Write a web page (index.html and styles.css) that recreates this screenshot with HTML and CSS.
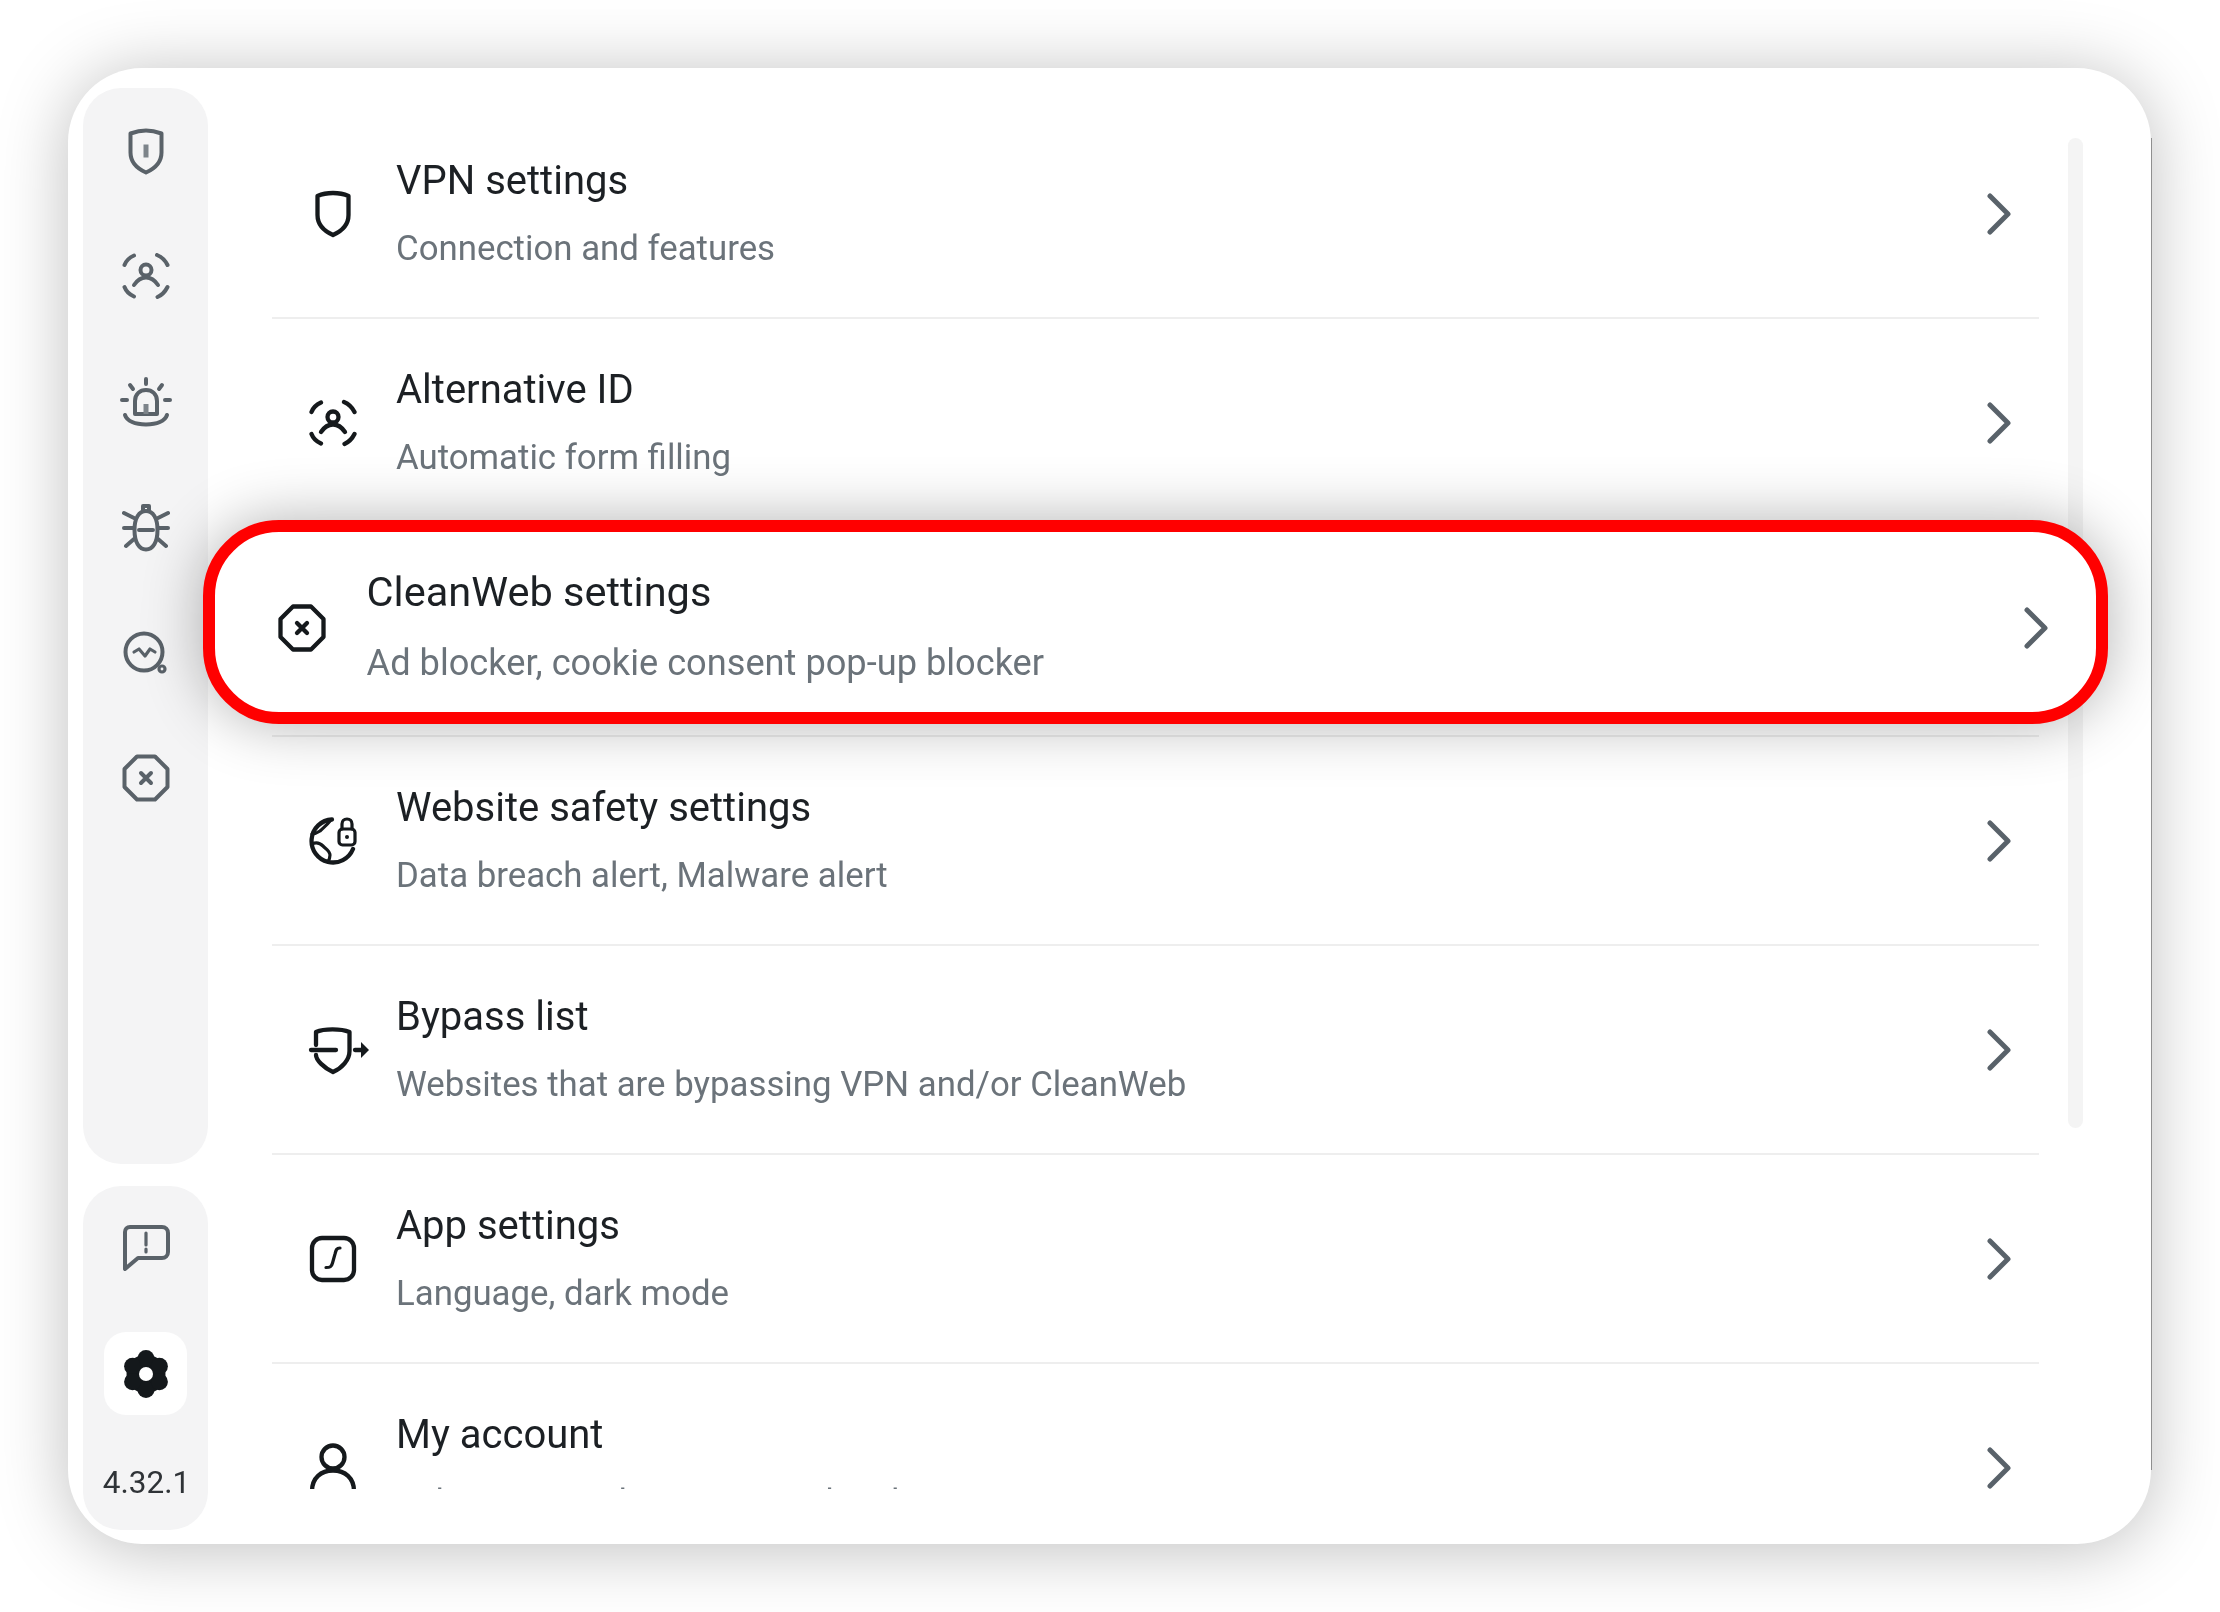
FILE: index.html
```html
<!DOCTYPE html>
<html lang="en">
<head>
<meta charset="utf-8">
<title>Settings</title>
<link rel="stylesheet" href="styles.css">
</head>
<body>
<div class="card">
  <aside class="sidebar">
    <nav class="rail rail-top">
      <svg class="icon side" viewBox="0 -1.500 48 48"><path d="M24 3C29 3 34 4 39.500 6V25C39.500 34 33 41 24 45C15 41 8.500 34 8.500 25V6C14 4 19 3 24 3Z"/><path class="thick" d="M24 17V30"/></svg>
      <svg class="icon side" viewBox="0 0 48 48"><path d="M2.500 13C4 9 7.500 5.500 12 3.500M35 3C40 5 43.500 9 45.500 13M2.500 35C4 39 7.500 42.500 12 44.500M35.500 45C40 43 43.500 39 45.500 35"/><circle cx="24" cy="18" r="5.500"/><path d="M12 33C15 28.500 19 25.500 24 25.500C29 25.500 33 28.500 36 33"/></svg>
      <svg class="icon side" viewBox="0 -2 48 48"><path d="M24 0V5M8 6L11 10M40 6L37 10M0 21H5M43 21H48M13 35V22C13 15 18 11 24 11C30 11 35 15 35 22V35Z"/><path class="thick" d="M24 25V35"/><path d="M3 36C5 42 13 45.500 24 45.500C35 45.500 43 42 45 36"/></svg>
      <svg class="icon side" viewBox="0 -1 48 48"><path d="M24 7C17 7 12.500 14 12.500 26C12.500 38 17 45.500 24 45.500C31 45.500 35.500 38 35.500 26C35.500 14 31 7 24 7Z"/><path d="M21 7V2H27V7M12 14L2 9M36 14L46 9M2 24H12M36 24H46M12 35L4 42M36 35L44 42M17 26H31"/></svg>
      <svg class="icon side" viewBox="0 -3 48 48"><circle cx="22" cy="21" r="18.500"/><path class="fine" d="M12 21L17 18L23 25L28 18L33 21"/><circle class="fine" cx="40" cy="38" r="3"/></svg>
      <svg class="icon side" viewBox="0 0 48 48"><path d="M15 2.500H33L45.500 15V33L33 45.500H15L2.500 33V15Z"/><path d="M19 19L29 29M29 19L19 29"/></svg>
    </nav>
    <div class="rail rail-bottom">
      <svg class="icon side" viewBox="0 0 48 48"><path d="M8 3H40C43.500 3 46 5.500 46 9V28C46 31.500 43.500 34 40 34H16L3 45V8C3 5 5 3 8 3Z"/><path class="fine" d="M24 9V21M24 25V28"/></svg>
      <div class="tile">
        <svg class="icon" viewBox="0 0 48 48"><g class="gear"><circle cx="24" cy="24" r="19.500"/><circle cx="24" cy="8.500" r="8.500"/><circle cx="24" cy="39.500" r="8.500"/><circle cx="10.600" cy="16.250" r="8.500"/><circle cx="37.400" cy="16.250" r="8.500"/><circle cx="10.600" cy="31.750" r="8.500"/><circle cx="37.400" cy="31.750" r="8.500"/></g><circle class="hole" cx="24" cy="24" r="7"/></svg>
      </div>
      <div class="version">4.32.1</div>
    </div>
  </aside>
  <main class="main">
    <div class="scrolltrack"></div>
    <ul class="list">
      <li class="row">
        <svg class="icon dark" viewBox="0 0 48 48"><path d="M24 3C30 3 35 4 39.500 6V25C39.500 34 33 41 24 45C15 41 8.500 34 8.500 25V6C13 4 18 3 24 3Z"/></svg>
        <div class="text"><div class="title">VPN settings</div><div class="sub">Connection and features</div></div>
        <svg class="chev" viewBox="0 0 24 42"><path d="M3 3L21 21L3 39"/></svg>
      </li>
      <li class="row">
        <svg class="icon dark" viewBox="0 0 48 48"><path d="M2.500 13C4 9 7.500 5.500 12 3.500M35 3C40 5 43.500 9 45.500 13M2.500 35C4 39 7.500 42.500 12 44.500M35.500 45C40 43 43.500 39 45.500 35"/><circle cx="24" cy="18" r="5.500"/><path d="M12 33C15 28.500 19 25.500 24 25.500C29 25.500 33 28.500 36 33"/></svg>
        <div class="text"><div class="title">Alternative ID</div><div class="sub">Automatic form filling</div></div>
        <svg class="chev" viewBox="0 0 24 42"><path d="M3 3L21 21L3 39"/></svg>
      </li>
      <li class="row">
        <div class="highlight">
          <svg class="icon dark" viewBox="0 0 48 48"><path d="M15 2.500H33L45.500 15V33L33 45.500H15L2.500 33V15Z"/><path d="M19 19L29 29M29 19L19 29"/></svg>
          <div class="text big"><div class="title">CleanWeb settings</div><div class="sub">Ad blocker, cookie consent pop-up blocker</div></div>
          <svg class="chev" viewBox="0 0 24 42"><path d="M3 3L21 21L3 39"/></svg>
        </div>
      </li>
      <li class="row">
        <svg class="icon dark" viewBox="0 0 48 48"><path d="M23 2.500A21.500 21.500 0 1 0 44 32"/><path class="fine" d="M21 4C18 8 14 11 11 14C8 16 5 17 3 17M3 27C7 25 11 26 14 29C17 32 21 34 21 38C21 41 20 43 19 45"/><rect class="fine" x="30" y="12" width="16" height="16" rx="3.500"/><path class="fine" d="M33 12V7C33 4 35 2 38 2C41 2 43 4 43 7V12"/><circle class="dot" cx="38" cy="20" r="2"/></svg>
        <div class="text"><div class="title">Website safety settings</div><div class="sub">Data breach alert, Malware alert</div></div>
        <svg class="chev" viewBox="0 0 24 42"><path d="M3 3L21 21L3 39"/></svg>
      </li>
      <li class="row">
        <svg class="icon dark" viewBox="0 0 48 48"><path d="M7 19V6C15 2.500 32 2.500 40.500 6V25C40.500 34 33 42 24 46C15 42 7 34 7 29"/><path d="M2 24H27"/><path d="M46 24H52"/><path class="dot" d="M52 16L60 24L52 32Z"/></svg>
        <div class="text"><div class="title">Bypass list</div><div class="sub">Websites that are bypassing VPN and/or CleanWeb</div></div>
        <svg class="chev" viewBox="0 0 24 42"><path d="M3 3L21 21L3 39"/></svg>
      </li>
      <li class="row">
        <svg class="icon dark" viewBox="0 0 48 48"><rect x="3" y="3" width="42" height="42" rx="10"/><path class="fine" d="M31 13C27.500 13 27 15 26 19L23.500 28C22.500 32 21 32.500 17 32.500"/></svg>
        <div class="text"><div class="title">App settings</div><div class="sub">Language, dark mode</div></div>
        <svg class="chev" viewBox="0 0 24 42"><path d="M3 3L21 21L3 39"/></svg>
      </li>
      <li class="row">
        <svg class="icon dark" viewBox="0 0 48 48"><circle cx="24" cy="13" r="11.500"/><path d="M3 47C3 34 12 26.500 24 26.500C36 26.500 45 34 45 47"/></svg>
        <div class="text"><div class="title">My account</div><div class="sub">Subscription plan, account details</div></div>
        <svg class="chev" viewBox="0 0 24 42"><path d="M3 3L21 21L3 39"/></svg>
      </li>
    </ul>
  </main>
</div>
</body>
</html>
```
FILE: styles.css
```css
* { box-sizing: border-box; }
html, body { margin: 0; background: #fff; }
body { padding: 68px; font-family: Roboto, "Liberation Sans", sans-serif; }
.card {
  position: relative;
  width: 2083px;
  height: 1476px;
  padding: 20px 0 14px 15px;
  display: flex;
  gap: 64px;
  background: #fff;
  border-radius: 74px;
  box-shadow: 0 5px 70px rgba(0, 0, 0, .26);
}
.card::after {
  content: "";
  position: absolute;
  right: -1px;
  top: 70px;
  bottom: 74px;
  width: 1.5px;
  background: #8f8f8f;
}
.sidebar { width: 125px; display: flex; flex-direction: column; gap: 22px; flex: none; }
.rail { background: #f4f4f5; border-radius: 38px; display: flex; flex-direction: column; align-items: center; padding-top: 38px; }
.rail-top { flex: 1; gap: 77.6px; }
.rail-bottom { padding-bottom: 25px; gap: 0; }
.tile { width: 83px; height: 83px; margin-top: 60px; background: #fff; border-radius: 22px; display: flex; align-items: center; justify-content: center; }
.version { margin-top: 46px; height: 44px; padding-left: 2px; font-size: 31.500px; line-height: 44px; color: #2f3337; filter: blur(.5px); }
.icon { width: 48px; height: 48px; flex: none; overflow: visible; fill: none; stroke-width: 4.300; stroke-linecap: round; stroke-linejoin: round; filter: blur(.5px); }
.side { stroke: #5a6269; stroke-width: 4; }
.dark { stroke: #15191c; }
.fine { stroke-width: 3.200; }
.thick { stroke-width: 5; stroke: #7d848a; stroke-linecap: butt; }
.dot { fill: #15191c; stroke: none; }
.gear circle { fill: #14181b; stroke: none; }
.hole { fill: #fff; stroke: none; }
.main { position: relative; flex: 1; padding-top: 22px; min-width: 0; }
.scrolltrack { position: absolute; left: 1796px; top: 50px; width: 15px; height: 990px; background: #f4f4f4; border-radius: 8px; }
.list { list-style: none; margin: 0; padding: 0; width: 1767px; height: 1379px; clip-path: inset(-300px -300px 0 -300px); }
.row { position: relative; height: 209px; padding: 0 28px 0 37px; display: flex; align-items: center; gap: 39px; border-bottom: 2px solid #eeeeee; }
.text { flex: 1; display: flex; flex-direction: column; gap: 23px; min-width: 0; margin-top: 1px; }
.title { font-size: 40px; line-height: 44px; color: #1c2024; filter: blur(.4px); }
.sub { font-size: 34.800px; line-height: 44px; color: #6b737a; filter: blur(.4px); }
.chev { width: 24px; height: 42px; flex: none; fill: none; stroke: #59626a; stroke-width: 5; stroke-linecap: round; stroke-linejoin: round; filter: blur(.5px); }
.highlight {
  position: absolute;
  left: -69px;
  top: -8px;
  width: 1905px;
  height: 204px;
  padding: 12px 48px 0 62.6px;
  display: flex;
  align-items: center;
  gap: 41px;
  background: #fff;
  border: 12px solid #f00;
  border-radius: 76px;
  box-shadow: 0 0 60px rgba(0, 0, 0, .3);
}
.text.big { gap: 27px; margin-top: -2px; }
.big .title { font-size: 41.500px; }
.big .sub { font-size: 36.200px; }
```
